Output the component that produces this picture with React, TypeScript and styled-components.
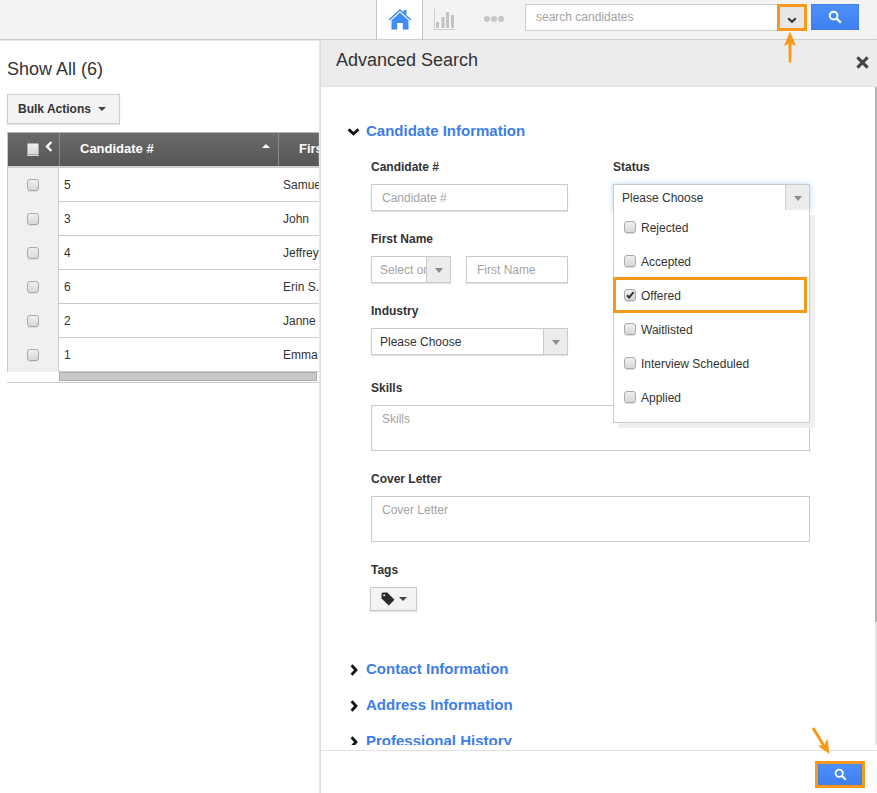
import React from "react";
import styled, { createGlobalStyle } from "styled-components";

const Global = createGlobalStyle`
  html, body { margin: 0; padding: 0; background: #fff; }
  body { font-family: "Liberation Sans", Arial, sans-serif; color: #333; font-size: 12px; }
  * { box-sizing: border-box; }
`;

const Page = styled.div`
  position: relative;
  width: 877px;
  height: 793px;
  overflow: hidden;
  display: flex;
  flex-direction: column;
`;

const TopBar = styled.header`
  flex: none;
  height: 40px;
  background: #f3f3f3;
  border-bottom: 1px solid #c8c8c8;
  box-shadow: 0 1px 0 #e6e6e6;
  display: flex;
  align-items: flex-start;
  padding-left: 376px;
`;

const HomeTab = styled.div`
  width: 47px;
  height: 39px;
  background: #fff;
  border-left: 1px solid #c4c4c4;
  border-right: 1px solid #c4c4c4;
  display: flex;
  align-items: center;
  justify-content: center;
  padding-bottom: 2px;
`;

const ChartSlot = styled.div`
  width: 11px;
  margin-left: 11px;
  height: 39px;
  display: flex;
  align-items: center;
  padding-bottom: 1px;
`;

const DotsSlot = styled.div`
  display: flex;
  gap: 1px;
  margin-left: 39px;
  height: 39px;
  align-items: center;
  padding-bottom: 1px;
`;

const Dot = styled.span`
  width: 6px;
  height: 6px;
  border-radius: 50%;
  background: #c6c6c6;
`;

const SearchBox = styled.div`
  margin-left: 21px;
  margin-top: 4px;
  width: 281px;
  height: 27px;
  display: flex;
  background: #fff;
  border: 1px solid #cdcdcd;
`;

const SearchText = styled.div`
  flex: 1;
  padding-left: 10px;
  line-height: 25px;
  font-size: 12px;
  color: #a3a3a3;
`;

const SearchCaret = styled.div`
  width: 28px;
  background: #e6e6e6;
  display: flex;
  align-items: center;
  justify-content: center;
  padding: 5px 0 0 1px;
`;

const BlueButton = styled.button<{ $w: number; $h: number }>`
  width: ${(p) => p.$w}px;
  height: ${(p) => p.$h}px;
  padding: 0;
  border: 1px solid #3f7fe8;
  background: linear-gradient(#4d8ffa, #3f80ee);
  display: flex;
  align-items: center;
  justify-content: center;
`;

const TopSearch = styled(BlueButton)`
  margin-left: 5px;
  margin-top: 4px;
`;

const Main = styled.main`
  flex: 1;
  padding: 0 0 0 7px;
  min-height: 0;
`;

const PageTitle = styled.h1`
  margin: 18px 0 0;
  font-size: 18px;
  font-weight: 400;
  line-height: 22px;
  color: #333;
`;

const BulkButton = styled.button`
  margin-top: 14px;
  display: flex;
  align-items: center;
  gap: 7px;
  width: 113px;
  height: 30px;
  padding: 0 0 0 10px;
  background: #f3f3f3;
  border: 1px solid #cfcfcf;
  box-shadow: 0 1px 1px #e2e2e2;
  font: 700 12px "Liberation Sans", Arial, sans-serif;
  color: #333;
`;

const Caret = styled.span<{ $dir?: "up" | "down" }>`
  width: 0;
  height: 0;
  border-left: 4px solid transparent;
  border-right: 4px solid transparent;
  ${(p) => (p.$dir === "up" ? "border-bottom: 4px solid #fff;" : "border-top: 4px solid #444;")}
`;

const Table = styled.div`
  margin-top: 8px;
  width: 600px;
  border-top: 1px solid #b5b5b5;
`;

const HeadRow = styled.div`
  display: grid;
  grid-template-columns: 52px 219px 1fr;
  height: 35px;
  background: linear-gradient(#6a6a6a, #565656);
  border-bottom: 2px solid #cfcfcf;
  border-left: 1px solid #c8c8c8;
  color: #fff;
  font-weight: 700;
  font-size: 13px;
`;

const HeadCheckCell = styled.div`
  display: flex;
  align-items: center;
  justify-content: flex-end;
  gap: 6px;
  padding: 0 6px 2px 0;
  border-right: 1px solid #8a8a8a;
`;

const Chevron = styled.span`
  display: flex;
  margin-top: -5px;
`;

const HeadCell = styled.div`
  display: flex;
  align-items: center;
  justify-content: space-between;
  padding: 0 8px 2px 20px;
  border-right: 1px solid #8a8a8a;
`;

const HeadCaret = styled.span`
  display: flex;
  margin-top: -5px;
`;

const Row = styled.div`
  display: grid;
  grid-template-columns: 51px 219px 1fr;
  height: 34px;
  border-bottom: 1px solid #cbcbcb;
  border-left: 1px solid #c8c8c8;
`;

const CheckCell = styled.div`
  background: #f0f0f0;
  border-right: 1px solid #cbcbcb;
  display: flex;
  align-items: center;
  justify-content: center;
`;

const Cell = styled.div`
  padding-left: 5px;
  line-height: 34px;
  font-size: 12px;
  color: #333;
`;

const FakeCheck = styled.span<{ $head?: boolean; $raise?: number }>`
  flex: none;
  position: relative;
  width: 12px;
  height: 12px;
  margin-top: ${(p) => (p.$raise ? -p.$raise : 0)}px;
  border-radius: ${(p) => (p.$head ? "1px" : "3px")};
  border: 1px solid #aaa;
  background: linear-gradient(#efefef, #d8d8d8);
  box-shadow: 0 1px 0 #ddd;
`;

const CheckSvg = styled.svg`
  position: absolute;
  left: 0;
  top: 0;
`;

const ScrollRow = styled.div`
  height: 11px;
  padding-left: 52px;
  border-bottom: 1px solid #cbcbcb;
`;

const HThumb = styled.div`
  width: 258px;
  height: 9px;
  background: #c9c9c9;
  border: 1px solid #adadad;
`;

const Panel = styled.aside`
  position: absolute;
  left: 320px;
  top: 40px;
  right: 0;
  bottom: 0;
  background: #fff;
  border-left: 1px solid #dcdcdc;
  box-shadow: -1px 0 1px #e8e8e8;
  display: flex;
  flex-direction: column;
`;

const PanelHead = styled.div`
  flex: none;
  height: 47px;
  background: #ececec;
  border-bottom: 1px solid #e2e2e2;
  display: flex;
  align-items: flex-start;
  justify-content: space-between;
  padding: 9px 8px 0 15px;
`;

const PanelTitle = styled.h2`
  margin: 0;
  font-size: 18px;
  line-height: 22px;
  font-weight: 400;
  color: #333;
`;

const Close = styled.span`
  margin-top: 7px;
  display: flex;
`;

const PanelBody = styled.div`
  position: relative;
  flex: 1;
  min-height: 0;
  overflow: hidden;
  margin-bottom: 5px;
  padding: 33px 0 0 25px;
`;

const VThumb = styled.div`
  position: absolute;
  right: 0;
  top: 0;
  bottom: 0;
  width: 2px;
  background: linear-gradient(#b4b4b4 0, #b4b4b4 535px, #e4e4e4 535px);
`;

const Section = styled.div<{ $next?: number }>`
  display: flex;
  align-items: center;
  height: 20px;
  margin-bottom: ${(p) => p.$next ?? 16}px;
`;

const SectionIcon = styled.span<{ $indent: number }>`
  width: 20px;
  display: flex;
  padding-left: ${(p) => p.$indent}px;
  margin-top: 4px;
`;

const SectionTitle = styled.h3`
  margin: 0;
  font-size: 15px;
  font-weight: 700;
  color: #3d7de8;
`;

const Form = styled.div`
  width: 439px;
  margin-left: 25px;
`;

const Columns = styled.div`
  display: grid;
  grid-template-columns: 197px 197px;
  column-gap: 45px;
`;

const Field = styled.div<{ $after?: number }>`
  margin-bottom: ${(p) => p.$after ?? 21}px;
`;

const Label = styled.div`
  min-height: 14px;
  font-size: 12px;
  font-weight: 700;
  line-height: 14px;
  color: #333;
  margin-bottom: 10px;
`;

const Input = styled.div<{ $w?: number }>`
  ${(p) => (p.$w ? `width: ${p.$w}px;` : "")}
  height: 27px;
  border: 1px solid #cbcbcb;
  box-shadow: 0 1px 1px #e4e4e4;
  background: #fff;
  padding-left: 10px;
  line-height: 26px;
  font-size: 12px;
  color: #a3a3a3;
`;

const Area = styled.div`
  height: 46px;
  border: 1px solid #cbcbcb;
  background: #fff;
  padding: 6px 0 0 10px;
  line-height: 14px;
  font-size: 12px;
  color: #a3a3a3;
`;

const Select = styled.div<{ $w?: number; $focus?: boolean }>`
  display: flex;
  ${(p) => (p.$w ? `width: ${p.$w}px;` : "")}
  height: 27px;
  border: 1px solid #cbcbcb;
  box-shadow: ${(p) => (p.$focus ? "0 0 5px rgba(120,170,235,.55)" : "0 1px 1px #e4e4e4")};
  background: #fff;
`;

const SelectText = styled.div<{ $muted?: boolean }>`
  flex: 1;
  min-width: 0;
  overflow: hidden;
  white-space: nowrap;
  padding-left: 8px;
  line-height: 26px;
  font-size: 12px;
  color: ${(p) => (p.$muted ? "#a3a3a3" : "#333")};
`;

const SelectArrow = styled.div`
  width: 24px;
  background: #ececec;
  border-left: 1px solid #cbcbcb;
  display: flex;
  align-items: center;
  justify-content: center;
`;

const SmallArrow = styled.span`
  width: 0;
  height: 0;
  margin-top: 2px;
  border-left: 4px solid transparent;
  border-right: 4px solid transparent;
  border-top: 5px solid #8c8c8c;
`;

const NameRow = styled.div`
  display: flex;
  justify-content: space-between;
`;

const StatusWrap = styled.div`
  position: relative;
`;

const Dropdown = styled.div`
  position: absolute;
  z-index: 2;
  left: 0;
  top: 50px;
  width: 197px;
  height: 213px;
  padding-top: 2px;
  background: #fff;
  border: 1px solid #cbcbcb;
  border-top: 0;
  box-shadow: 5px 5px 0 #efefef;
`;

const Option = styled.div`
  display: flex;
  align-items: center;
  gap: 5px;
  height: 34px;
  padding: 0 0 2px 10px;
  font-size: 12px;
  color: #333;
`;

const TagButton = styled.button`
  margin-left: -1px;
  display: flex;
  align-items: center;
  justify-content: center;
  gap: 4px;
  width: 47px;
  height: 24px;
  padding: 0;
  background: #f3f3f3;
  border: 1px solid #cbcbcb;
  box-shadow: 0 1px 1px #e2e2e2;
`;

const PanelFoot = styled.div`
  flex: none;
  height: 43px;
  border-top: 1px solid #e2e2e2;
  background: #fff;
  display: flex;
  justify-content: flex-end;
  align-items: flex-start;
  padding: 12px 15px 0 0;
`;

const Mark = styled.div<{ $x: number; $y: number; $w: number; $h: number }>`
  position: absolute;
  z-index: 5;
  left: ${(p) => p.$x}px;
  top: ${(p) => p.$y}px;
  width: ${(p) => p.$w}px;
  height: ${(p) => p.$h}px;
  border: 3px solid #f79a1c;
  pointer-events: none;
`;

const Arrow = styled.svg<{ $x: number; $y: number }>`
  position: absolute;
  z-index: 5;
  left: ${(p) => p.$x}px;
  top: ${(p) => p.$y}px;
`;

const Magnifier = ({ size = 14 }: { size?: number }) => (
  <svg width={size} height={size} viewBox="0 0 14 14" fill="none">
    <circle cx="5.6" cy="5.6" r="3.9" stroke="#fff" strokeWidth="1.9" />
    <path d="M8.6 8.6L12.8 12.6" stroke="#fff" strokeWidth="2.2" />
  </svg>
);

const Check = ({ checked = false, head = false, raise = 0 }: { checked?: boolean; head?: boolean; raise?: number }) => (
  <FakeCheck $head={head} $raise={raise}>
    {checked && (
      <CheckSvg width="10" height="10" viewBox="0 0 10 10">
        <path d="M2 5.2L4.2 7.4L8.6 2.2" fill="none" stroke="#333" strokeWidth="2" />
      </CheckSvg>
    )}
  </FakeCheck>
);

const Down = () => (
  <svg width="13" height="8" viewBox="0 0 13 8">
    <path d="M1.6 1.4L6.5 5.8L11.4 1.4" fill="none" stroke="#111" strokeWidth="2.8" />
  </svg>
);

const Right = () => (
  <svg width="8" height="12" viewBox="0 0 8 12">
    <path d="M1.6 1.2L6 6L1.6 10.8" fill="none" stroke="#111" strokeWidth="2.8" />
  </svg>
);

const rows: [string, string][] = [
  ["5", "Samuel"],
  ["3", "John"],
  ["4", "Jeffrey"],
  ["6", "Erin S."],
  ["2", "Janne"],
  ["1", "Emma"],
];

const options = ["Rejected", "Accepted", "Offered", "Waitlisted", "Interview Scheduled", "Applied"];

export default function App() {
  return (
    <Page>
      <Global />
      <TopBar>
        <HomeTab>
          <svg width="24" height="22" viewBox="0 0 24 22">
            <path d="M0.5 11.5L12 1L15.6 4.3V2H18.4V6.9L23.5 11.5L22.4 12.4L12 3L1.6 12.4Z" fill="#3f8cf5" />
            <path d="M12 4.6L20.5 12.2V21.5H14.8V15H9.2V21.5H3.5V12.2Z" fill="#3f8cf5" />
          </svg>
        </HomeTab>
        <ChartSlot>
          <svg width="22" height="21" viewBox="0 0 22 21" style={{ flex: "none" }}>
            <path d="M0.5 0V20.5H21.5" fill="none" stroke="#cfcfcf" />
            <path d="M2 13h3v6H2zM7.5 8h3v11h-3zM12 3h3v16h-3zM17 6h3v13h-3z" fill="#c4c4c4" />
          </svg>
        </ChartSlot>
        <DotsSlot>
          <Dot />
          <Dot />
          <Dot />
        </DotsSlot>
        <SearchBox>
          <SearchText>search candidates</SearchText>
          <SearchCaret>
            <svg width="10" height="7" viewBox="0 0 10 7">
              <path d="M1.2 1.2L5 4.8L8.8 1.2" fill="none" stroke="#333" strokeWidth="2.1" />
            </svg>
          </SearchCaret>
        </SearchBox>
        <TopSearch $w={48} $h={26}>
          <Magnifier />
        </TopSearch>
      </TopBar>

      <Main>
        <PageTitle>Show All (6)</PageTitle>
        <BulkButton>
          Bulk Actions <Caret />
        </BulkButton>
        <Table>
          <HeadRow>
            <HeadCheckCell>
              <Check head />
              <Chevron>
                <svg width="8" height="11" viewBox="0 0 8 11">
                  <path d="M6.4 1L2 5.5L6.4 10" fill="none" stroke="#fff" strokeWidth="2.4" />
                </svg>
              </Chevron>
            </HeadCheckCell>
            <HeadCell>
              Candidate #
              <HeadCaret>
                <Caret $dir="up" />
              </HeadCaret>
            </HeadCell>
            <HeadCell>First Name</HeadCell>
          </HeadRow>
          {rows.map(([id, name]) => (
            <Row key={id}>
              <CheckCell>
                <Check />
              </CheckCell>
              <Cell>{id}</Cell>
              <Cell>{name}</Cell>
            </Row>
          ))}
          <ScrollRow>
            <HThumb />
          </ScrollRow>
        </Table>
      </Main>

      <Panel>
        <PanelHead>
          <PanelTitle>Advanced Search</PanelTitle>
          <Close>
            <svg width="13" height="13" viewBox="0 0 13 13">
              <path d="M1.4 1.4L11.6 11.6M11.6 1.4L1.4 11.6" stroke="#444" strokeWidth="3" />
            </svg>
          </Close>
        </PanelHead>
        <PanelBody>
          <VThumb />
          <Section $next={20}>
            <SectionIcon $indent={1}>
              <Down />
            </SectionIcon>
            <SectionTitle>Candidate Information</SectionTitle>
          </Section>
          <Form>
            <Columns>
              <div>
                <Field>
                  <Label>Candidate #</Label>
                  <Input>Candidate #</Input>
                </Field>
                <Field>
                  <Label>First Name</Label>
                  <NameRow>
                    <Select $w={80}>
                      <SelectText $muted>Select one</SelectText>
                      <SelectArrow>
                        <SmallArrow />
                      </SelectArrow>
                    </Select>
                    <Input $w={102}>First Name</Input>
                  </NameRow>
                </Field>
                <Field $after={26}>
                  <Label>Industry</Label>
                  <Select>
                    <SelectText>Please Choose</SelectText>
                    <SelectArrow>
                      <SmallArrow />
                    </SelectArrow>
                  </Select>
                </Field>
              </div>
              <StatusWrap>
                <Field>
                  <Label>Status</Label>
                  <Select $focus>
                    <SelectText>Please Choose</SelectText>
                    <SelectArrow>
                      <SmallArrow />
                    </SelectArrow>
                  </Select>
                </Field>
                <Field>
                  <Label />
                  <Input />
                </Field>
                <Field>
                  <Label />
                  <Input />
                </Field>
                <Dropdown>
                  {options.map((o) => (
                    <Option key={o}>
                      <Check checked={o === "Offered"} raise={2} />
                      {o}
                    </Option>
                  ))}
                </Dropdown>
              </StatusWrap>
            </Columns>
            <Field $after={21}>
              <Label>Skills</Label>
              <Area>Skills</Area>
            </Field>
            <Field $after={21}>
              <Label>Cover Letter</Label>
              <Area>Cover Letter</Area>
            </Field>
            <Field $after={47}>
              <Label>Tags</Label>
              <TagButton>
                <svg width="14" height="14" viewBox="0 0 14 14">
                  <path d="M0.5 2V6.5L7.8 13.6L13.5 7.8L6.3 0.5H2Q0.5 0.5 0.5 2Z" fill="#2c2c2c" />
                  <circle cx="3.2" cy="3.2" r="1" fill="#f3f3f3" />
                </svg>
                <Caret />
              </TagButton>
            </Field>
          </Form>
          <Section>
            <SectionIcon $indent={4}>
              <Right />
            </SectionIcon>
            <SectionTitle>Contact Information</SectionTitle>
          </Section>
          <Section>
            <SectionIcon $indent={4}>
              <Right />
            </SectionIcon>
            <SectionTitle>Address Information</SectionTitle>
          </Section>
          <Section>
            <SectionIcon $indent={4}>
              <Right />
            </SectionIcon>
            <SectionTitle>Professional History</SectionTitle>
          </Section>
        </PanelBody>
        <PanelFoot>
          <BlueButton $w={44} $h={22}>
            <Magnifier size={13} />
          </BlueButton>
        </PanelFoot>
      </Panel>

      <Mark $x={777} $y={4} $w={30} $h={27} />
      <Mark $x={613} $y={277} $w={194} $h={36} />
      <Mark $x={815} $y={761} $w={50} $h={27} />
      <Arrow $x={783} $y={31} width="14" height="32" viewBox="0 0 14 32">
        <path d="M7 0.5L1 15L5.4 13L5.8 31.5H8.4L8.6 13L13 15Z" fill="#f79a1c" />
      </Arrow>
      <Arrow $x={810} $y={726} width="24" height="30" viewBox="0 0 24 30">
        <path d="M3 2L13.5 19" stroke="#f79a1c" strokeWidth="3" fill="none" />
        <path d="M19.5 28L17.5 12.5L14.5 18.5L8 20Z" fill="#f79a1c" />
      </Arrow>
    </Page>
  );
}
